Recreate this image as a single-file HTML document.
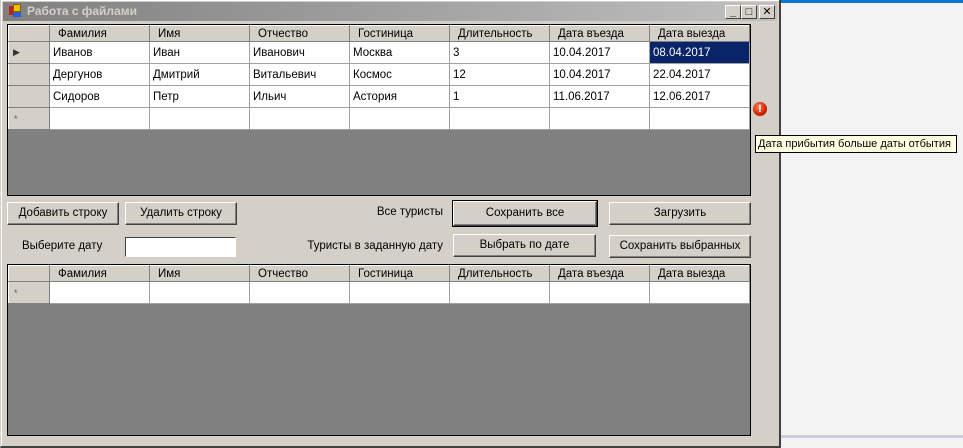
<!DOCTYPE html>
<html><head><meta charset="utf-8"><style>
*{box-sizing:border-box;margin:0;padding:0}
body{width:963px;height:448px;background:#f3f3f3;position:relative;overflow:hidden;font-family:"Liberation Sans","DejaVu Sans",sans-serif;font-size:11.5px;color:#000}
.a{position:absolute}
.win{left:0;top:0;width:781px;height:448px;background:#d4d0c8;border-left:1px solid #d4d0c8;border-right:2px solid #404040;border-bottom:2px solid #404040;box-shadow:inset 1px 1px 0 #fff}
.title{left:3px;top:2px;width:774px;height:19px;background:linear-gradient(90deg,#808080,#c0c0c0);color:#d4d0c8;font-weight:bold;font-size:12px;line-height:19px;padding-left:24px}
.tb{top:5px;width:16px;height:14px;background:#d4d0c8;border:1px solid;border-color:#fff #404040 #404040 #fff;font-size:11px;font-weight:bold;line-height:12px;text-align:center}
.grid{background:#808080;border:1px solid #000;overflow:hidden}
table{border-collapse:collapse;table-layout:fixed;background:#fff}
td{border:1px solid #a0a0a0;height:22px;padding-left:3px;white-space:nowrap;font-size:11.5px}
tr.h td{height:16px;background:#d4d0c8;border-color:#fff #808080 #808080 #fff;padding-left:8px;padding-top:1px}
td.rh{background:#d4d0c8;width:40px;border-color:#fff #808080 #808080 #fff}
.btn{background:#d4d0c8;border:1px solid;border-color:#fff #404040 #404040 #fff;box-shadow:inset -1px -1px 0 #808080;text-align:center;font-size:11.5px}
.lbl{font-size:11.5px}
</style></head><body>
<div class="a" style="left:780px;top:0;width:183px;height:3px;background:#0a74d4"></div>
<div class="a" style="left:780px;top:435px;width:183px;height:3px;background:#cdcde0"></div>
<div class="a win"></div>
<div class="a title">Работа с файлами</div>
<div class="a" style="left:9px;top:6px;width:6px;height:9px;background:#c02010"></div>
<div class="a" style="left:13px;top:4px;width:8px;height:8px;background:#f0c000;border:1px solid #806000"></div>
<div class="a" style="left:13px;top:12px;width:8px;height:5px;background:#3060d0"></div>
<div class="a tb" style="left:725px">_</div>
<div class="a tb" style="left:741px">□</div>
<div class="a tb" style="left:759px">✕</div>

<div class="a grid" style="left:7px;top:24px;width:744px;height:172px">
<table style="width:741px">
<colgroup><col style="width:41px"><col style="width:100px"><col style="width:100px"><col style="width:100px"><col style="width:100px"><col style="width:100px"><col style="width:100px"><col style="width:100px"></colgroup>
<tr class="h"><td></td><td>Фамилия</td><td>Имя</td><td>Отчество</td><td>Гостиница</td><td>Длительность</td><td>Дата въезда</td><td>Дата выезда</td></tr>
<tr><td class="rh" style="font-size:9px;padding-left:4px;color:#333">▶</td><td>Иванов</td><td>Иван</td><td>Иванович</td><td>Москва</td><td>3</td><td>10.04.2017</td><td style="background:#0a246a;color:#fff">08.04.2017</td></tr>
<tr><td class="rh"></td><td>Дергунов</td><td>Дмитрий</td><td>Витальевич</td><td>Космос</td><td>12</td><td>10.04.2017</td><td>22.04.2017</td></tr>
<tr><td class="rh"></td><td>Сидоров</td><td>Петр</td><td>Ильич</td><td>Астория</td><td>1</td><td>11.06.2017</td><td>12.06.2017</td></tr>
<tr><td class="rh" style="font-size:9px;padding-left:5px;color:#555">*</td><td></td><td></td><td></td><td></td><td></td><td></td><td></td></tr>
</table></div>

<div class="a" style="left:753px;top:102px;width:14px;height:14px;border-radius:50%;background:radial-gradient(circle at 40% 35%,#ff8060,#d02000 60%,#a01000);color:#fff;font-weight:bold;font-size:11px;line-height:14px;text-align:center">!</div>
<div class="a" style="left:755px;top:135px;width:202px;height:18px;background:#ffffe1;border:1px solid #000;font-size:11px;line-height:16px;padding-left:2px;white-space:nowrap;overflow:hidden">Дата прибытия больше даты отбытия</div>

<div class="a btn" style="left:7px;top:202px;width:112px;height:23px;line-height:21px">Добавить строку</div>
<div class="a btn" style="left:125px;top:202px;width:112px;height:23px;line-height:21px">Удалить строку</div>
<div class="a lbl" style="left:300px;top:206px;width:143px;text-align:right">Все туристы</div>
<div class="a btn" style="left:453px;top:201px;width:144px;height:25px;line-height:22px;outline:1px solid #000">Сохранить все</div>
<div class="a btn" style="left:609px;top:202px;width:142px;height:23px;line-height:21px">Загрузить</div>
<div class="a lbl" style="left:22px;top:240px">Выберите дату</div>
<div class="a" style="left:125px;top:237px;width:111px;height:20px;background:#fff;border:1px solid;border-color:#404040 #fff #fff #404040"></div>
<div class="a lbl" style="left:250px;top:240px;width:193px;text-align:right">Туристы в заданную дату</div>
<div class="a btn" style="left:453px;top:234px;width:143px;height:23px;line-height:20px">Выбрать по дате</div>
<div class="a btn" style="left:609px;top:235px;width:142px;height:23px;line-height:21px">Сохранить выбранных</div>

<div class="a grid" style="left:7px;top:264px;width:744px;height:172px">
<table style="width:741px">
<colgroup><col style="width:41px"><col style="width:100px"><col style="width:100px"><col style="width:100px"><col style="width:100px"><col style="width:100px"><col style="width:100px"><col style="width:100px"></colgroup>
<tr class="h"><td></td><td>Фамилия</td><td>Имя</td><td>Отчество</td><td>Гостиница</td><td>Длительность</td><td>Дата въезда</td><td>Дата выезда</td></tr>
<tr><td class="rh" style="font-size:9px;padding-left:5px;color:#555">*</td><td></td><td></td><td></td><td></td><td></td><td></td><td></td></tr>
</table></div>
</body></html>
